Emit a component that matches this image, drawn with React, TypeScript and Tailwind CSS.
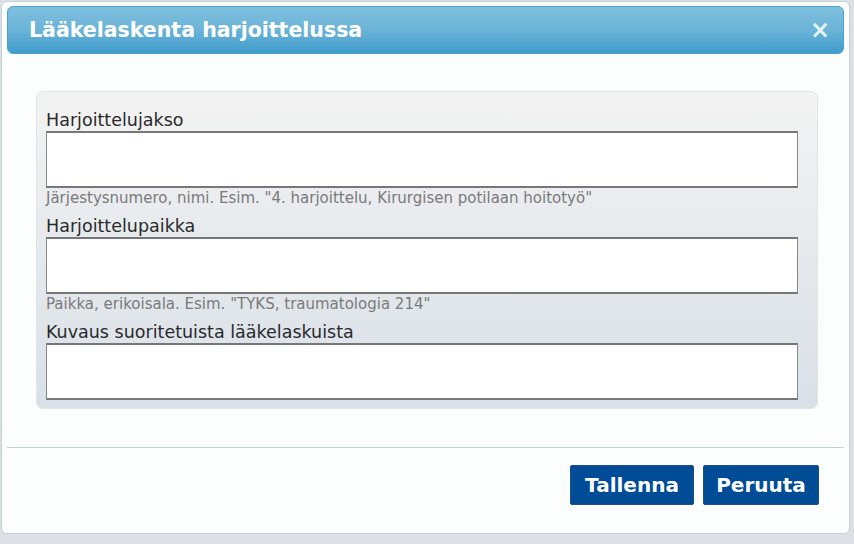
import React from "react";

const fields = [
  { label: "Harjoittelujakso", help: 'Järjestysnumero, nimi. Esim. "4. harjoittelu, Kirurgisen potilaan hoitotyö"' },
  { label: "Harjoittelupaikka", help: 'Paikka, erikoisala. Esim. "TYKS, traumatologia 214"' },
  { label: "Kuvaus suoritetuista lääkelaskuista", help: "" },
];

export default function App() {
  return (
    <div className="h-[544px] w-[854px] bg-[#dcdfe4] font-['DejaVu_Sans',sans-serif] overflow-hidden">
      <div className="ml-[1px] mt-[1px] flex h-[533px] w-[849px] flex-col rounded-[6px] border border-[#c7d1d9] bg-[#fcfdfd]">
        {/* Header */}
        <div className="mx-[5px] mt-[4px] flex h-[48px] items-center justify-between rounded-[6px] border border-[#4aa3cf] bg-gradient-to-b from-[#7fc0de] via-[#6bb3d8] to-[#3d9dcb] pl-[21px] pr-[13px]">
          <h1 className="text-[20.5px] font-bold text-white">Lääkelaskenta harjoittelussa</h1>
          <span className="text-[24px] font-black leading-none text-[#e6f2f8]">×</span>
        </div>

        {/* Form panel */}
        <div className="ml-[34px] mr-[31px] mt-[37px] flex flex-col rounded-[7px] border border-[#e2e5e8] bg-gradient-to-b from-[#f3f3f3] to-[#d9e0e7] pb-[8px] pl-[9px] pr-[19px] pt-[17px]">
          {fields.map((f) => (
            <div key={f.label} className="flex flex-col">
              <label className="text-[17.5px] leading-[22px] text-[#2a2a2a]">{f.label}</label>
              <div className="h-[57px] border-x border-b-2 border-t-2 border-x-[#888] border-b-[#777] border-t-[#777] bg-white" />
              {f.help && <p className="mb-[8px] mt-[1px] text-[15px] leading-[18px] text-[#7a7a7a]">{f.help}</p>}
            </div>
          ))}
        </div>

        {/* Footer */}
        <div className="mx-[5px] mt-[38px] border-t border-[#c4d2da]" />
        <div className="mr-[30px] mt-[17px] flex justify-end gap-[9px]">
          <button className="h-[40px] w-[124px] rounded-[2px] border border-[#1f4f86] bg-[#004c97] text-[20px] font-bold text-white">
            Tallenna
          </button>
          <button className="h-[40px] w-[116px] rounded-[2px] border border-[#1f4f86] bg-[#004c97] text-[20px] font-bold text-white">
            Peruuta
          </button>
        </div>
      </div>
    </div>
  );
}
